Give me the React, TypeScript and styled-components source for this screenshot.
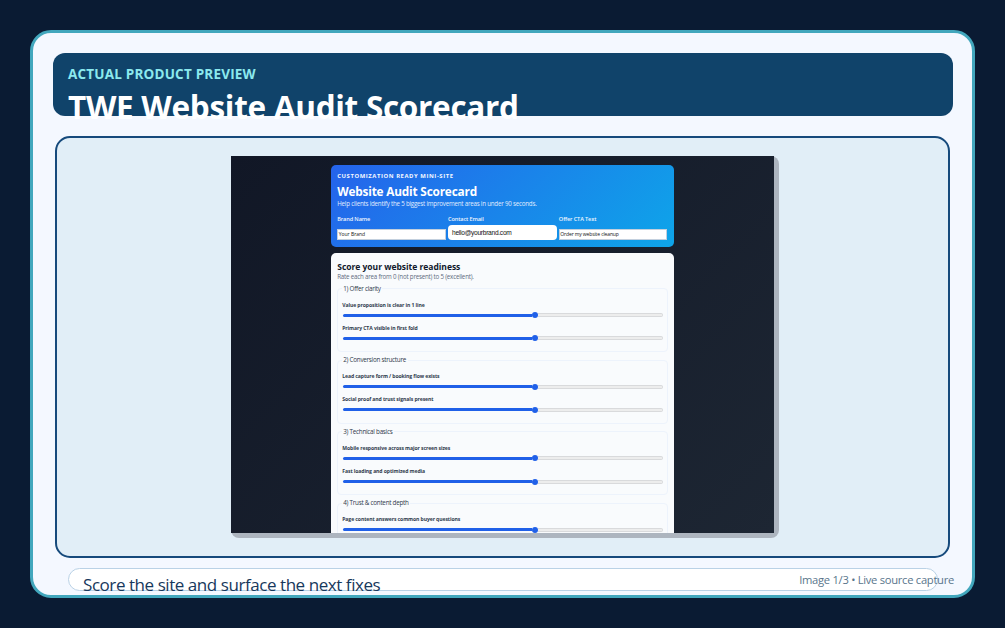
import React from "react";
import styled, { createGlobalStyle } from "styled-components";

const Global = createGlobalStyle`
  * { box-sizing: border-box; }
  body { margin: 0; background: #0a1b33; overflow: hidden; }
`;

const Stage = styled.main`
  width: 1005px;
  height: 628px;
  padding: 30px 30px;
  background: #0a1b33;
  font-family: "Open Sans", "Noto Sans", sans-serif;
`;

const Frame = styled.section`
  display: flex;
  flex-direction: column;
  width: 945px;
  height: 568px;
  padding: 20px 19px 0 20px;
  border: 3px solid #42a7bd;
  border-radius: 21px;
  background: #f4f8ff;
`;

const Text = styled.div<{
  $size: number;
  $line: number;
  $color: string;
  $weight?: number;
  $spacing?: number;
}>`
  margin: 0;
  font-size: ${(p) => p.$size}px;
  line-height: ${(p) => p.$line}px;
  color: ${(p) => p.$color};
  font-weight: ${(p) => p.$weight ?? 400};
  letter-spacing: ${(p) => p.$spacing ?? 0}px;
  white-space: nowrap;
`;

const Banner = styled.header`
  height: 63px;
  flex: none;
  padding: 11px 15px 0;
  border-radius: 12px;
  background: #10436a;
`;

const Panel = styled.div`
  display: flex;
  flex: none;
  justify-content: center;
  width: 895px;
  height: 422px;
  margin: 20px 0 0 2px;
  padding: 18px 0 0;
  border: 2px solid #164a7c;
  border-radius: 15px;
  background: #e1eef7;
`;

const Shadow = styled.div`
  width: 548px;
  height: 382px;
  margin-left: 4px;
  border-radius: 8px;
  background: #adb5bf;
`;

const Capture = styled.div`
  display: flex;
  flex-direction: column;
  align-items: center;
  gap: 6px;
  width: 543px;
  height: 376.5px;
  padding: 9px 0 0 1px;
  overflow: hidden;
  background: linear-gradient(135deg, #111726, #1d2633);
`;

const Hero = styled.div`
  width: 343.5px;
  height: 82px;
  flex: none;
  padding: 6px 6.5px 0;
  border-radius: 5px;
  background: linear-gradient(135deg, #2563eb, #0ea5e9);
`;

const Fields = styled.div`
  display: grid;
  grid-template-columns: repeat(3, 108.5px);
  column-gap: 2.3px;
  margin-top: 8px;
`;

const Field = styled.label`
  display: flex;
  flex-direction: column;
  justify-content: space-between;
  height: 25.3px;
`;

const PlainInput = styled.div`
  height: 11.5px;
  padding-left: 0.5px;
  border: 1px solid #c3d0de;
  background: #fff;
`;

const RoundInput = styled.div`
  height: 15.5px;
  padding-left: 4px;
  border-radius: 4px;
  background: #fff;
  font-family: "Liberation Sans", sans-serif;
`;

const Form = styled.div`
  width: 343.5px;
  height: 330px;
  flex: none;
  padding: 8px 6.5px 0;
  border-radius: 5px 5px 0 0;
  background: #f9fbfd;
`;

const Groups = styled.div`
  padding-top: 3.5px;
`;

const Group = styled.fieldset`
  min-width: 0;
  height: 67.6px;
  margin: 0 0 4px;
  padding: 7px 4px 0;
  border: 1px solid #edf3fc;
  border-radius: 4px;
`;

const Legend = styled.legend`
  margin: 0;
  padding: 0 1.5px 0 1px;
`;

const Question = styled.div`
  height: 23.4px;
`;

const Slider = styled.div`
  display: flex;
  align-items: center;
  width: 320px;
  height: 6px;
  margin: 2.3px 0 0 0.8px;
`;

const Filled = styled.div`
  width: 188.5px;
  height: 3px;
  border-radius: 2px 0 0 2px;
  background: #2060e8;
`;

const Thumb = styled.div`
  width: 6px;
  height: 6px;
  border-radius: 50%;
  background: #2060e8;
`;

const Track = styled.div`
  flex: 1;
  height: 4px;
  border: 1px solid #d9dadc;
  border-left: 0;
  border-radius: 0 2px 2px 0;
  background: #ededed;
`;

const Footer = styled.footer`
  display: flex;
  flex: none;
  justify-content: space-between;
  width: 870px;
  height: 23px;
  margin: 10px 0 0 15px;
  padding-left: 14px;
  border: 1px solid #bad2e6;
  border-radius: 12px;
  background: #fff;
`;

const Caption = styled.div`
  margin-right: -17px;
`;

const groups = [
  { title: "1) Offer clarity", items: ["Value proposition is clear in 1 line", "Primary CTA visible in first fold"] },
  { title: "2) Conversion structure", items: ["Lead capture form / booking flow exists", "Social proof and trust signals present"] },
  { title: "3) Technical basics", items: ["Mobile responsive across major screen sizes", "Fast loading and optimized media"] },
  { title: "4) Trust & content depth", items: ["Page content answers common buyer questions"] },
];

export default function App() {
  return (
    <Stage>
      <Global />
      <Frame>
        <Banner>
          <Text $size={13.5} $line={20} $color="#8be9ee" $weight={700} $spacing={0.2}>ACTUAL PRODUCT PREVIEW</Text>
          <Text as="h1" $size={31.5} $line={46} $color="#fff" $weight={700} $spacing={-0.29}>TWE Website Audit Scorecard</Text>
        </Banner>
        <Panel>
          <Shadow>
            <Capture>
              <Hero>
                <Text $size={5.9} $line={10} $color="#f4f8ff" $weight={700} $spacing={0.57}>CUSTOMIZATION READY MINI-SITE</Text>
                <Text $size={11.8} $line={20} $color="#fff" $weight={700} $spacing={-0.18}>Website Audit Scorecard</Text>
                <Text $size={6.2} $line={6} $color="#e0edfe" $spacing={-0.21}>Help clients identify the 5 biggest improvement areas in under 90 seconds.</Text>
                <Fields>
                  <Field>
                    <Text $size={5.6} $line={9} $color="#edf4fe" $weight={600} $spacing={-0.12}>Brand Name</Text>
                    <PlainInput><Text $size={5} $line={9.5} $color="#111">Your Brand</Text></PlainInput>
                  </Field>
                  <Field>
                    <Text $size={5.6} $line={9} $color="#edf4fe" $weight={600} $spacing={-0.12}>Contact Email</Text>
                    <RoundInput><Text $size={6.6} $line={15} $color="#111" $spacing={-0.27}>hello@yourbrand.com</Text></RoundInput>
                  </Field>
                  <Field>
                    <Text $size={5.6} $line={9} $color="#edf4fe" $weight={600} $spacing={-0.12}>Offer CTA Text</Text>
                    <PlainInput><Text $size={5} $line={9.5} $color="#111" $spacing={-0.12}>Order my website cleanup</Text></PlainInput>
                  </Field>
                </Fields>
              </Hero>
              <Form>
                <Text $size={8.5} $line={11} $color="#10182b" $weight={700} $spacing={-0.02}>Score your website readiness</Text>
                <Text $size={6.2} $line={9} $color="#606b7d" $spacing={-0.21}>Rate each area from 0 (not present) to 5 (excellent).</Text>
                <Groups>
                  {groups.map((g) => (
                    <Group key={g.title}>
                      <Legend><Text $size={6.3} $line={8} $color="#2f3a4b" $spacing={-0.26}>{g.title}</Text></Legend>
                      {g.items.map((q) => (
                        <Question key={q}>
                          <Text $size={5.1} $line={10.2} $color="#303b4d" $weight={700} $spacing={-0.09}>{q}</Text>
                          <Slider><Filled /><Thumb /><Track /></Slider>
                        </Question>
                      ))}
                    </Group>
                  ))}
                </Groups>
              </Form>
            </Capture>
          </Shadow>
        </Panel>
        <Footer>
          <Text $size={17} $line={31} $color="#17385c" $spacing={-0.44}>Score the site and surface the next fixes</Text>
          <Caption><Text $size={11.2} $line={22} $color="#59758b" $spacing={-0.28}>Image 1/3 • Live source capture</Text></Caption>
        </Footer>
      </Frame>
    </Stage>
  );
}
